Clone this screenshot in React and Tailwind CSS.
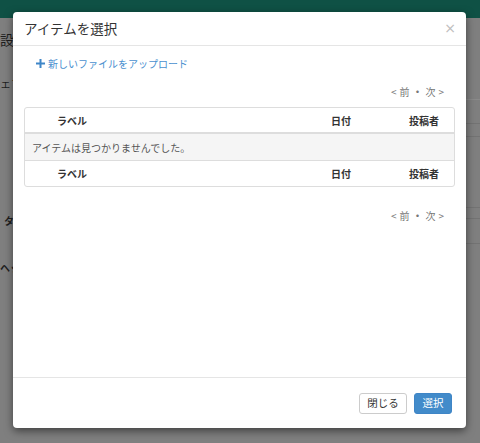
import React from "react";

function Pager() {
  return (
    <div className="flex justify-end pr-[11px] text-[10px] leading-none text-[#777]">
      <span className="flex items-center gap-[3px]">
        <span>&lt;</span>
        <span>前</span>
        <span className="font-bold">・</span>
        <span>次</span>
        <span>&gt;</span>
      </span>
    </div>
  );
}

function HeadRow({ h }) {
  return (
    <div className={`flex ${h} items-center pl-[32px] text-[10px] font-bold text-[#333]`}>
      <div className="flex-1">ラベル</div>
      <div className="w-[78px]">日付</div>
      <div className="w-[45px]">投稿者</div>
    </div>
  );
}

export default function App() {
  return (
    <div className="relative h-[443px] w-[480px] overflow-hidden bg-[#7f7f7f] font-['Noto_Sans_CJK_JP',sans-serif]">
      <div className="h-[18px] bg-[#0f5145]" />
      <div className="flex">
        <div className="flex w-[14px] flex-col text-[#1e1e1e]">
          <div className="mt-[11px] text-[14px] leading-[20px]">設</div>
          <div className="mt-[26px] whitespace-nowrap text-[11px] leading-[16px]">ェフ</div>
          <div className="mt-[123px] ml-[4px] text-[10px] font-bold leading-[14px]">タ</div>
          <div className="mt-[33px] whitespace-nowrap text-[10px] font-bold leading-[14px]">ヘッ</div>
        </div>
        <div className="ml-auto flex w-[14px] flex-col">
          <div className="mt-[81px] h-px bg-[#8a8a8a]" />
          <div className="mt-[23px] h-px bg-[#737373]" />
          <div className="mt-[12px] h-px bg-[#737373]" />
          <div className="mt-[70px] h-px bg-[#737373]" />
          <div className="mt-[10px] h-px bg-[#737373]" />
          <div className="mt-[24px] h-px bg-[#737373]" />
        </div>
      </div>

      <div className="absolute left-[13px] top-[12px] flex h-[416px] w-[453px] flex-col rounded-[4px] bg-white shadow-[0_3px_9px_rgba(0,0,0,0.5)]">
        <div className="flex h-[34px] items-center justify-between border-b border-[#e5e5e5] pl-[11px] pr-[10px]">
          <div className="text-[13.5px] text-[#333]">アイテムを選択</div>
          <div className="-mt-[2px] font-['DejaVu_Sans',sans-serif] text-[14px] leading-none text-[#bdbdbd]">×</div>
        </div>

        <div className="flex-1 px-[11px]">
          <div className="mt-[10px] flex items-center gap-[3px] pl-[12px] text-[10px] text-[#4a90cf]">
            <svg width="9" height="9" viewBox="0 0 9 9">
              <path d="M3.5 0h2v3.5H9v2H5.5V9h-2V5.5H0v-2h3.5z" fill="#3f86c8" />
            </svg>
            <span>新しいファイルをアップロード</span>
          </div>

          <div className="mt-[16px]">
            <Pager />
          </div>

          <div className="mt-[10px] overflow-hidden rounded-[3px] border border-[#dddddd]">
            <div className="border-b-2 border-[#dddddd]">
              <HeadRow h="h-[24px]" />
            </div>
            <div className="flex h-[27px] items-center border-b border-[#dddddd] bg-[#f5f5f5] pl-[7px] text-[10px] text-[#555]">
              アイテムは見つかりませんでした。
            </div>
            <HeadRow h="h-[25px]" />
          </div>

          <div className="mt-[24px]">
            <Pager />
          </div>
        </div>

        <div className="flex h-[51px] items-center justify-end gap-[7px] border-t border-[#e5e5e5] pr-[14px]">
          <button className="flex h-[21px] w-[48px] items-center justify-center rounded-[3px] border border-[#cccccc] bg-white text-[10.5px] text-[#333]">
            閉じる
          </button>
          <button className="flex h-[21px] w-[38px] items-center justify-center rounded-[3px] border border-[#3f85c6] bg-[#428bca] text-[10.5px] text-white">
            選択
          </button>
        </div>
      </div>
    </div>
  );
}
